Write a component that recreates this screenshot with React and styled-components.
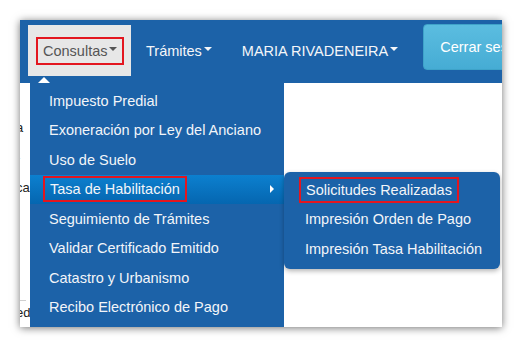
import React from 'react'
import styled, { createGlobalStyle } from 'styled-components'

const GlobalStyle = createGlobalStyle`
    html, body {
        margin: 0;
        padding: 0;
        background: #ffffff;
    }
    body {
        font-family: "Liberation Sans", Arial, sans-serif;
    }
`

const Page = styled.div`
    width: 522px;
    height: 348px;
    padding: 20px 20px 0 20px;
    box-sizing: border-box;
`

const Frame = styled.div`
    position: relative;
    width: 482px;
    height: 307px;
    overflow: hidden;
    background: #ffffff;
    box-shadow: 0 1px 8px rgba(0, 0, 0, 0.55);
`

const Navbar = styled.div`
    display: flex;
    align-items: flex-start;
    height: 63px;
    padding-left: 8px;
    background: #1c62a8;
    font-size: 14.5px;
`

const NavLink = styled.div`
    display: flex;
    align-items: center;
    box-sizing: border-box;
    height: 51px;
    margin-top: 5px;
    padding: 0 ${p => (p.$active ? '8px' : '15px')};
    width: ${p => (p.$width ? p.$width + 'px' : 'auto')};
    background: ${p => (p.$active ? '#e7e7e7' : 'transparent')};
    color: ${p => (p.$active ? '#555555' : '#f4f6f9')};
    white-space: nowrap;
`

const Caret = styled.span`
    display: inline-block;
    width: 0;
    height: 0;
    margin-left: 2px;
    vertical-align: middle;
    border-top: 4px solid currentColor;
    border-left: 4px solid transparent;
    border-right: 4px solid transparent;
    position: relative;
    top: -2px;
`

const Marked = styled.span`
    display: inline-flex;
    align-items: center;
    box-sizing: border-box;
    height: ${p => p.$h || 26}px;
    padding: 0 5px;
    margin-left: ${p => (p.$flush ? 0 : -6)}px;
    border: 2px solid #e3161f;
`

const LogoutButton = styled.div`
    margin: 4px 0 0 10px;
    height: 46px;
    width: 110px;
    box-sizing: border-box;
    padding: 0 0 0 16px;
    display: flex;
    align-items: center;
    border-radius: 4px;
    border: 1px solid #3ea3c9;
    background: linear-gradient(#5bbde0, #46acd4);
    color: #ffffff;
    white-space: nowrap;
`

const Content = styled.div`
    display: flex;
    flex-direction: column;
    height: 244px;
    padding-top: 37px;
    box-sizing: border-box;
    overflow: hidden;
`

const EdgeRow = styled.div`
    height: ${p => (p.$line ? 'auto' : '30px')};
    width: 10px;
    margin-left: -4px;
    padding-top: ${p => (p.$line ? '4px' : 0)};
    border-top: ${p => (p.$line ? '1px solid #cfcfcf' : 'none')};
    font-size: 13px;
    line-height: 15px;
    color: #222;
    white-space: nowrap;
`

const PointerUp = styled.div`
    position: absolute;
    left: 18px;
    top: 57px;
    width: 0;
    height: 0;
    border-left: 6px solid transparent;
    border-right: 6px solid transparent;
    border-bottom: 6px solid #ffffff;
`

const Menu = styled.div`
    position: absolute;
    left: 10px;
    top: 63px;
    width: 254px;
    bottom: 0;
    padding-top: 3px;
    box-sizing: border-box;
    display: flex;
    flex-direction: column;
    background: #1c62a8;
    font-size: 14.5px;
`

const SubMenu = styled.div`
    position: absolute;
    left: 264px;
    top: 152px;
    width: 216px;
    padding: 3px 0 5px 0;
    border-radius: 6px;
    display: flex;
    flex-direction: column;
    background: #1c62a8;
    box-shadow: 0 2px 5px rgba(0, 0, 0, 0.3);
    font-size: 14.5px;
`

const MenuItem = styled.div`
    display: flex;
    align-items: center;
    justify-content: space-between;
    height: 29.5px;
    padding: 0 10px 0 ${p => p.$indent || 19}px;
    color: #f2f5f9;
    white-space: nowrap;
    background: ${p => (p.$hover ? 'linear-gradient(#0c80cf, #0566b0)' : 'transparent')};
`

const RightArrow = styled.span`
    width: 0;
    height: 0;
    border-top: 4px solid transparent;
    border-bottom: 4px solid transparent;
    border-left: 4px solid #ffffff;
`

const menuItems = [
    'Impuesto Predial',
    'Exoneración por Ley del Anciano',
    'Uso de Suelo',
    'Tasa de Habilitación',
    'Seguimiento de Trámites',
    'Validar Certificado Emitido',
    'Catastro y Urbanismo',
    'Recibo Electrónico de Pago',
]

const subItems = [
    'Solicitudes Realizadas',
    'Impresión Orden de Pago',
    'Impresión Tasa Habilitación',
]

const edgeRows = ['a', '-', 'ca', '', '', '']

export default function App() {
    return (
        <Page>
            <GlobalStyle />
            <Frame>
                <Navbar>
                    <NavLink $active $width={103}>
                        <Marked $h={28} $flush>
                            Consultas<Caret />
                        </Marked>
                    </NavLink>
                    <NavLink>
                        Trámites<Caret />
                    </NavLink>
                    <NavLink>
                        MARIA RIVADENEIRA<Caret />
                    </NavLink>
                    <LogoutButton>Cerrar sesión</LogoutButton>
                </Navbar>
                <Content>
                    {edgeRows.map((t, i) => (
                        <EdgeRow key={i}>{t}</EdgeRow>
                    ))}
                    <EdgeRow $line>ed</EdgeRow>
                </Content>
                <PointerUp />
                <Menu>
                    {menuItems.map(item =>
                        item === 'Tasa de Habilitación' ? (
                            <MenuItem key={item} $hover>
                                <Marked>{item}</Marked>
                                <RightArrow />
                            </MenuItem>
                        ) : (
                            <MenuItem key={item}>{item}</MenuItem>
                        )
                    )}
                </Menu>
                <SubMenu>
                    {subItems.map((item, i) => (
                        <MenuItem key={item} $indent={21}>
                            {i === 0 ? <Marked>{item}</Marked> : item}
                        </MenuItem>
                    ))}
                </SubMenu>
            </Frame>
        </Page>
    )
}
